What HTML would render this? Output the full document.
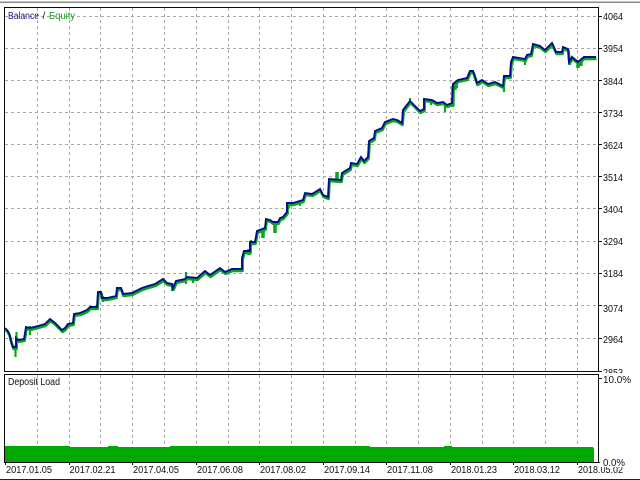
<!DOCTYPE html>
<html>
<head>
<meta charset="utf-8">
<style>
html,body{margin:0;padding:0;background:#fff;width:640px;height:480px;overflow:hidden}
svg{display:block}
text{font-family:"Liberation Sans",sans-serif;font-size:10px;fill:#111}
</style>
</head>
<body>
<svg width="640" height="480" viewBox="0 0 640 480">
<defs><filter id="s" x="0" y="0" width="100%" height="100%"><feGaussianBlur stdDeviation="0.3"/></filter></defs>
<rect width="640" height="480" fill="#fff"/>
<g filter="url(#s)">
<rect x="0" y="1.5" width="640" height="1.5" fill="#8a8a8a"/>
<!-- grid -->
<g stroke="#a8a8a8" stroke-width="1" stroke-dasharray="3 3" fill="none">
<path d="M5 16.500H598M5 48.500H598M5 80.500H598M5 112.500H598M5 144.500H598M5 176.500H598M5 208.500H598M5 241.500H598M5 273.500H598M5 305.500H598M5 338.500H598"/>
<path d="M37.500 8V371M69.500 8V371M100.500 8V371M132.500 8V371M164.500 8V371M196.500 8V371M228.500 8V371M259.500 8V371M291.500 8V371M323.500 8V371M355.500 8V371M386.500 8V371M418.500 8V371M450.500 8V371M482.500 8V371M513.500 8V371M545.500 8V371M577.500 8V371"/>
<path d="M37.500 375V446M69.500 375V446M100.500 375V446M132.500 375V446M164.500 375V446M196.500 375V446M228.500 375V446M259.500 375V446M291.500 375V446M323.500 375V446M355.500 375V446M386.500 375V446M418.500 375V446M450.500 375V446M482.500 375V446M513.500 375V446M545.500 375V446M577.500 375V446"/>
</g>
<!-- green equity -->
<g fill="none" stroke="#0aa51e" stroke-linejoin="round">
<path stroke-width="2.8" transform="translate(0.5 1.8)" d="M5 328L7 330L9 333L11 341L13 347L16 347L16 338L18 340L24 339L26 327L30 328L38 326L45 324L50 319L55 323L62 330L65 328L68 324L73 323L74 314L80 313L87 310L90 307L97 307L98 292L101 292L102 298L107 298L116 296L117 288L121 288L123 294L132 293L142 288L148 286L155 284L163 279L167 283L172 284L173 288L176 281L185 279L187 277L197 278L205 271L210 275L220 268L225 272L232 269L242 269L242 258L244 251L250 251L250 242L255 242L257 231L265 228L266 219L270 220L273 222L278 222L280 218L283 217L287 212L287 203L293 203L303 200L305 193L312 194L320 189L323 195L328 197L329 179L341 180L342 173L350 168L351 163L357 164L361 157L364 161L368 157L369 141L374 138L375 131L382 128L385 122L393 119L397 120L402 123L403 110L410 101L417 108L420 111L424 109L424 99L432 100L437 103L443 102L447 105L452 103L453 84L458 80L467 78L470 71L473 71L477 83L482 80L488 84L495 82L503 86L504 76L510 76L511 62L513 57L525 59L527 55L531 54L533 44L540 46L545 50L552 43L556 52L562 52L563 47L568 49L569 62L572 57L578 62L584 57L590 57L596 57"/>
<path stroke-width="2.2" d="M15.500 345V357M16.500 332V340M30 326V335M103 296V302M172 284V291M445 103V112M453 95V107M457 82V88M478 82V86M504 84V92M525 60V65M570 60V65M431 100V105M410 98V104M186 272V284M251 240V246M193 277V283M289 205V208M300 202V206"/>
<path stroke-width="3.500" d="M249 249V255M263 230V238M275 222V233M337 172V181M578 60V68M453 86V106M581 60V66M455 84V90"/>
</g>
<!-- blue balance -->
<path fill="none" stroke="#00118c" stroke-width="1.900" stroke-linejoin="miter" d="M5 328L7 330L9 333L11 341L13 347L16 347L16 338L18 340L24 339L26 327L30 328L38 326L45 324L50 319L55 323L62 330L65 328L68 324L73 323L74 314L80 313L87 310L90 307L97 307L98 292L101 292L102 298L107 298L116 296L117 288L121 288L123 294L132 293L142 288L148 286L155 284L163 279L167 283L172 284L173 288L176 281L185 279L187 277L197 278L205 271L210 275L220 268L225 272L232 269L242 269L242 258L244 251L250 251L250 242L255 242L257 231L265 228L266 219L270 220L273 222L278 222L280 218L283 217L287 212L287 203L293 203L303 200L305 193L312 194L320 189L323 195L328 197L329 179L341 180L342 173L350 168L351 163L357 164L361 157L364 161L368 157L369 141L374 138L375 131L382 128L385 122L393 119L397 120L402 123L403 110L410 101L417 108L420 111L424 109L424 99L432 100L437 103L443 102L447 105L452 103L453 84L458 80L467 78L470 71L473 71L477 83L482 80L488 84L495 82L503 86L504 76L510 76L511 62L513 57L525 59L527 55L531 54L533 44L540 46L545 50L552 43L556 52L562 52L563 47L568 49L569 62L572 57L578 62L584 57L590 57L596 57"/>
<!-- deposit load -->
<path fill="#00a800" d="M5 446H70V447H108V446H118V447H170V446H370V447H444V446H452V447H593L594 449V462H5Z"/>
<!-- frames -->
<g stroke="#111" stroke-width="1" fill="none">
<path d="M4.500 7.500H598.500V371.500H4.500Z"/>
<path d="M4.500 374.500H598.500V462.500H4.500Z"/>
<path d="M598 16.500h4M598 48.500h4M598 80.500h4M598 112.500h4M598 144.500h4M598 176.500h4M598 208.500h4M598 241.500h4M598 273.500h4M598 305.500h4M598 338.500h4M598 371.500h4M598 378.500h4M598 462.500h4"/>
<path d="M5.500 462v3M69.500 462v3M132.500 462v3M196.500 462v3M259.500 462v3M323.500 462v3M386.500 462v3M450.500 462v3M513.500 462v3M577.500 462v3"/>
</g>
<rect x="0" y="479" width="640" height="1" fill="#222"/>
<!-- legend -->
<text x="8" y="19" textLength="31" lengthAdjust="spacingAndGlyphs" style="fill:#1a1a80">Balance</text>
<text x="42.500" y="19">/</text>
<text x="49" y="19" textLength="26" lengthAdjust="spacingAndGlyphs" style="fill:#1f9a2a">Equity</text>
<text x="8" y="385" textLength="52" lengthAdjust="spacingAndGlyphs">Deposit Load</text>
<!-- y labels -->
<text x="603" y="20" textLength="20" lengthAdjust="spacingAndGlyphs">4064</text>
<text x="603" y="52" textLength="20" lengthAdjust="spacingAndGlyphs">3954</text>
<text x="603" y="85" textLength="20" lengthAdjust="spacingAndGlyphs">3844</text>
<text x="603" y="117" textLength="20" lengthAdjust="spacingAndGlyphs">3734</text>
<text x="603" y="149" textLength="20" lengthAdjust="spacingAndGlyphs">3624</text>
<text x="603" y="181" textLength="20" lengthAdjust="spacingAndGlyphs">3514</text>
<text x="603" y="213" textLength="20" lengthAdjust="spacingAndGlyphs">3404</text>
<text x="603" y="245" textLength="20" lengthAdjust="spacingAndGlyphs">3294</text>
<text x="603" y="277" textLength="20" lengthAdjust="spacingAndGlyphs">3184</text>
<text x="603" y="312" textLength="20" lengthAdjust="spacingAndGlyphs">3074</text>
<text x="603" y="343" textLength="20" lengthAdjust="spacingAndGlyphs">2964</text>
<text x="603" y="376" textLength="20" lengthAdjust="spacingAndGlyphs">2853</text>
<!-- x labels -->
<text x="6" y="473" textLength="46" lengthAdjust="spacingAndGlyphs">2017.01.05</text>
<text x="69.500" y="473" textLength="46" lengthAdjust="spacingAndGlyphs">2017.02.21</text>
<text x="133" y="473" textLength="46" lengthAdjust="spacingAndGlyphs">2017.04.05</text>
<text x="197" y="473" textLength="46" lengthAdjust="spacingAndGlyphs">2017.06.08</text>
<text x="260" y="473" textLength="46" lengthAdjust="spacingAndGlyphs">2017.08.02</text>
<text x="324" y="473" textLength="46" lengthAdjust="spacingAndGlyphs">2017.09.14</text>
<text x="387" y="473" textLength="46" lengthAdjust="spacingAndGlyphs">2017.11.08</text>
<text x="451" y="473" textLength="46" lengthAdjust="spacingAndGlyphs">2018.01.23</text>
<text x="514" y="473" textLength="46" lengthAdjust="spacingAndGlyphs">2018.03.12</text>
<text x="578" y="473" textLength="45" lengthAdjust="spacingAndGlyphs">2018.05.02</text>
<!-- overlapping label boxes -->
<rect x="603" y="373" width="30" height="11" fill="#fff"/>
<text x="603" y="383" textLength="28" lengthAdjust="spacingAndGlyphs">10.0%</text>
<rect x="600" y="458" width="26" height="9" fill="#fff"/>
<text x="603" y="466" textLength="22" lengthAdjust="spacingAndGlyphs">0.0%</text>
</g>
</svg>
</body>
</html>
